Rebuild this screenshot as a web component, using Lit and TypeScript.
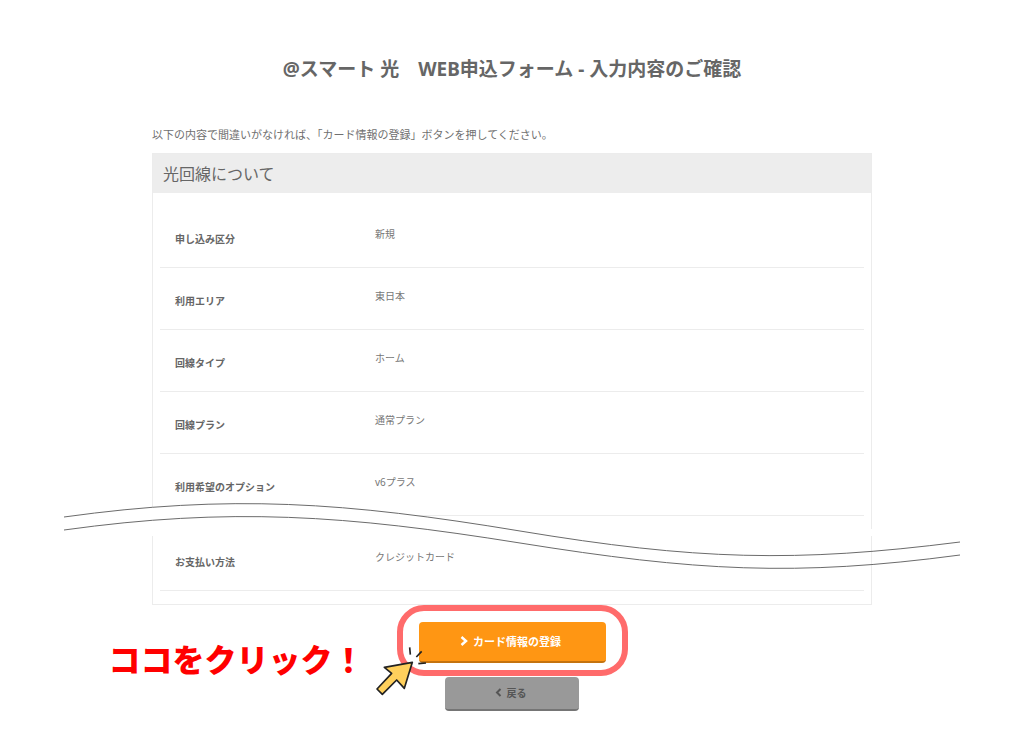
import { LitElement, html, css } from "lit";
import { customElement, property } from "lit/decorators.js";

interface Entry {
  label: string;
  value: string;
}

@customElement("confirm-panel")
export class ConfirmPanel extends LitElement {
  @property() heading = "";
  @property({ attribute: false }) entries: Entry[] = [];

  static styles = css`
    :host {
      display: block;
    }
    .panel {
      position: relative;
      border: 1px solid #ececec;
      padding-bottom: 13px;
    }
    .heading {
      margin: 0 0 13px;
      padding: 2px 10px 0;
      background: #ededed;
      font-size: 16px;
      font-weight: 400;
      line-height: 37px;
    }
    .list {
      margin: 0 7px;
    }
    .row {
      display: grid;
      grid-template-columns: 200px 1fr;
      box-sizing: border-box;
      height: 62px;
      padding: 18px 15px 0;
      border-bottom: 1px solid #ececec;
      font-size: 10px;
      line-height: 20px;
    }
    .row:last-child {
      margin-top: 13px;
    }
    .label {
      padding-top: 5px;
      font-weight: 700;
    }
    .value {
      margin: 0;
      color: #777;
    }
    .cut {
      position: absolute;
      left: -89px;
      bottom: 14px;
      width: calc(100% + 178px);
      height: 100px;
    }
    .mask {
      fill: #fff;
    }
    .wave {
      fill: none;
      stroke: #6b6b6b;
      stroke-width: 1;
      vector-effect: non-scaling-stroke;
    }
  `;

  render() {
    return html`
      <section class="panel">
        <h2 class="heading">${this.heading}</h2>
        <dl class="list">
          ${this.entries.map(
            (e) => html`<div class="row">
              <dt class="label">${e.label}</dt>
              <dd class="value">${e.value}</dd>
            </div>`
          )}
        </dl>
        <svg class="cut" viewBox="64 490 896 100" preserveAspectRatio="none" aria-hidden="true">
          <path class="mask" d="M64 517C230 494 345 502 520 531L550 536H64Z" />
          <path class="mask" d="M64 529H960V536H64Z" />
          <path class="wave" d="M64 517C230 494 345 502 520 531S795 563 960 542" />
          <path class="wave" d="M64 530C230 507 345 515 520 543S795 577 960 555" />
        </svg>
      </section>
    `;
  }
}

@customElement("app-root")
export class AppRoot extends LitElement {
  static styles = css`
    :host {
      display: block;
      color: #666;
      background: #fff;
      font-family: "Noto Sans", "Noto Sans CJK JP", sans-serif;
    }
    .page {
      max-width: 720px;
      margin: 0 auto;
      padding: 54px 24px 26px;
    }
    .title {
      margin: 0;
      font-size: 19px;
      line-height: 30px;
      text-align: center;
    }
    .lead {
      margin: 41px 0 8px;
      color: #707070;
      font-size: 11px;
      line-height: 20px;
    }
    .actions {
      display: flex;
      flex-direction: column;
      align-items: center;
      gap: 14px;
      padding-top: 17px;
    }
    .primary {
      position: relative;
    }
    .button {
      display: flex;
      align-items: center;
      justify-content: center;
      gap: 5px;
      box-sizing: border-box;
      padding: 0 3px 2px 0;
      border: 0;
      border-radius: 4px;
      font-family: inherit;
      font-weight: 700;
      cursor: pointer;
    }
    .register {
      width: 187px;
      height: 41px;
      border-bottom: 2px solid #c4730f;
      background: #ff9613;
      color: #fff;
      font-size: 11px;
    }
    .back {
      width: 134px;
      height: 34px;
      border-bottom: 2px solid #757575;
      background: #999;
      color: #555;
      font-size: 10px;
    }
    .chevron {
      fill: none;
      stroke: currentColor;
      stroke-width: 2;
    }
    .ring {
      position: absolute;
      inset: -17px -22px -13px -22px;
      border: 6px solid #ff6b6b;
      border-radius: 27px;
      pointer-events: none;
    }
    .callout {
      position: absolute;
      right: calc(100% + 54px);
      top: 16px;
      margin: 0;
      color: #f00;
      font-family: "Noto Sans CJK JP", sans-serif;
      font-size: 32px;
      font-weight: 900;
      line-height: 40px;
      white-space: nowrap;
    }
    .pointer {
      position: absolute;
      left: -54px;
      top: 13px;
      pointer-events: none;
    }
  `;

  private entries: Entry[] = [
    { label: "申し込み区分", value: "新規" },
    { label: "利用エリア", value: "東日本" },
    { label: "回線タイプ", value: "ホーム" },
    { label: "回線プラン", value: "通常プラン" },
    { label: "利用希望のオプション", value: "v6プラス" },
    { label: "お支払い方法", value: "クレジットカード" },
  ];

  render() {
    return html`
      <main class="page" lang="ja">
        <h1 class="title">@スマート 光　WEB申込フォーム - 入力内容のご確認</h1>
        <p class="lead">以下の内容で間違いがなければ、「カード情報の登録」ボタンを押してください。</p>
        <confirm-panel heading="光回線について" .entries=${this.entries}></confirm-panel>
        <div class="actions">
          <div class="primary">
            <button class="button register" type="button">
              <svg class="chevron" width="8" height="10" viewBox="0 0 8 10" aria-hidden="true">
                <path d="M1.5 1L6 5L1.5 9" stroke-width="2.5" />
              </svg>
              <span>カード情報の登録</span>
            </button>
            <div class="ring"></div>
            <p class="callout">ココをクリック！</p>
            <svg class="pointer" width="80" height="70" viewBox="0 0 240 210" aria-hidden="true">
              <path
                d="M142 82L58 97L80 115L36 162L52 178L95 135L118 160Z"
                fill="#ffd05c"
                stroke="#222"
                stroke-width="5"
                stroke-linejoin="round"
              />
              <path d="M134 37L136 59M154 66L170 49M160 86L183 84" fill="none" stroke="#222" stroke-width="5" />
            </svg>
          </div>
          <button class="button back" type="button">
            <svg class="chevron" width="7" height="9" viewBox="0 0 7 9" aria-hidden="true">
              <path d="M5.5 1L2 4.5L5.5 8" />
            </svg>
            <span>戻る</span>
          </button>
        </div>
      </main>
    `;
  }
}
